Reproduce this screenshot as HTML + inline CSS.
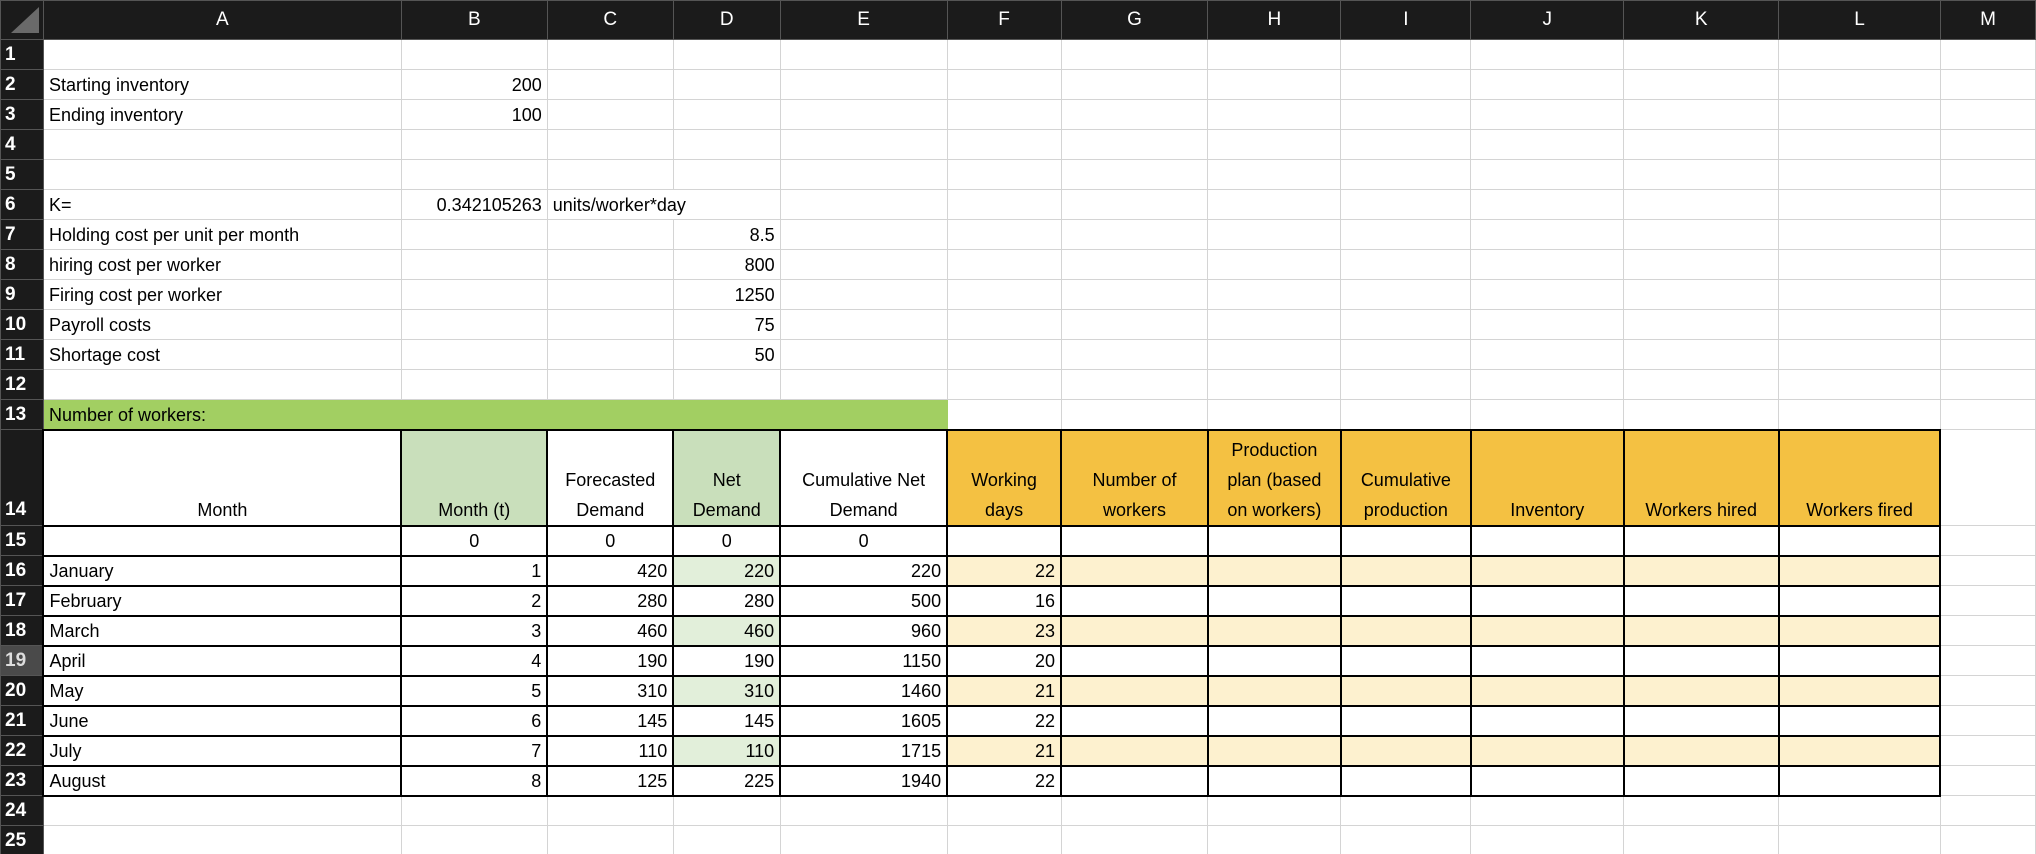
<!DOCTYPE html>
<html><head><meta charset="utf-8"><style>
html,body{margin:0;padding:0;background:#fff;width:2036px;height:854px;overflow:hidden}
table{border-collapse:collapse;table-layout:fixed;font-family:"Liberation Sans",Arial,sans-serif;font-size:18px;color:#000}
td{border:1px solid #d4d4d4;padding:0 5px;white-space:nowrap;overflow:hidden;vertical-align:bottom;line-height:28px}
tr.h td{background:#1b1b1b;color:#fff;text-align:center;vertical-align:middle;border:1px solid #555;font-size:19px}
td.n{background:#1b1b1b;color:#fff;border:1px solid #555;text-align:left;padding:0 0 0 4px;font-size:19px;font-weight:bold}
td.sel{background:#4a4a4a;color:#ddd}
.r{text-align:right}.c{text-align:center}
.b{border:2px solid #000}
.gr{background:#a2cf62}
.lg{background:#c9dfbb}
.pg{background:#e2efda}
.or{background:#f4c142}
.po{background:#fdf1cf}
tr.t14 td{line-height:30px;text-align:center;white-space:normal}
</style></head><body>
<table>
<colgroup><col style="width:43px"><col style="width:358px"><col style="width:146px"><col style="width:126px"><col style="width:107px"><col style="width:167px"><col style="width:114px"><col style="width:147px"><col style="width:133px"><col style="width:130px"><col style="width:153px"><col style="width:155px"><col style="width:162px"><col style="width:95px"></colgroup>
<tr class="h" style="height:39px"><td style="position:relative"><svg width="36" height="30" style="position:absolute;left:4px;top:4px"><polygon points="34,2 34,28 6,28" fill="#6a6a6a"/></svg></td><td>A</td><td>B</td><td>C</td><td>D</td><td>E</td><td>F</td><td>G</td><td>H</td><td>I</td><td>J</td><td>K</td><td>L</td><td>M</td></tr>
<tr style="height:30px"><td class="n">1</td><td></td><td></td><td></td><td></td><td></td><td></td><td></td><td></td><td></td><td></td><td></td><td></td><td></td></tr>
<tr style="height:30px"><td class="n">2</td><td>Starting inventory</td><td class="r">200</td><td></td><td></td><td></td><td></td><td></td><td></td><td></td><td></td><td></td><td></td><td></td></tr>
<tr style="height:30px"><td class="n">3</td><td>Ending inventory</td><td class="r">100</td><td></td><td></td><td></td><td></td><td></td><td></td><td></td><td></td><td></td><td></td><td></td></tr>
<tr style="height:30px"><td class="n">4</td><td></td><td></td><td></td><td></td><td></td><td></td><td></td><td></td><td></td><td></td><td></td><td></td><td></td></tr>
<tr style="height:30px"><td class="n">5</td><td></td><td></td><td></td><td></td><td></td><td></td><td></td><td></td><td></td><td></td><td></td><td></td><td></td></tr>
<tr style="height:30px"><td class="n">6</td><td>K=</td><td class="r">0.342105263</td><td colspan="2" style="border-right-color:#d4d4d4">units/worker*day</td><td></td><td></td><td></td><td></td><td></td><td></td><td></td><td></td><td></td></tr>
<tr style="height:30px"><td class="n">7</td><td>Holding cost per unit per month</td><td></td><td></td><td class="r">8.5</td><td></td><td></td><td></td><td></td><td></td><td></td><td></td><td></td><td></td></tr>
<tr style="height:30px"><td class="n">8</td><td>hiring cost per worker</td><td></td><td></td><td class="r">800</td><td></td><td></td><td></td><td></td><td></td><td></td><td></td><td></td><td></td></tr>
<tr style="height:30px"><td class="n">9</td><td>Firing cost per worker</td><td></td><td></td><td class="r">1250</td><td></td><td></td><td></td><td></td><td></td><td></td><td></td><td></td><td></td></tr>
<tr style="height:30px"><td class="n">10</td><td>Payroll costs</td><td></td><td></td><td class="r">75</td><td></td><td></td><td></td><td></td><td></td><td></td><td></td><td></td><td></td></tr>
<tr style="height:30px"><td class="n">11</td><td>Shortage cost</td><td></td><td></td><td class="r">50</td><td></td><td></td><td></td><td></td><td></td><td></td><td></td><td></td><td></td></tr>
<tr style="height:30px"><td class="n">12</td><td></td><td></td><td></td><td></td><td></td><td></td><td></td><td></td><td></td><td></td><td></td><td></td><td></td></tr>
<tr style="height:30px"><td class="n">13</td><td colspan="5" class="gr" style="border-color:#a2cf62">Number of workers:</td><td></td><td></td><td></td><td></td><td></td><td></td><td></td><td></td></tr>
<tr class="t14" style="height:96px"><td class="n" style="text-align:left">14</td><td class="b">Month</td><td class="b lg">Month (t)</td><td class="b">Forecasted<br>Demand</td><td class="b lg">Net<br>Demand</td><td class="b">Cumulative Net<br>Demand</td><td class="b or">Working<br>days</td><td class="b or">Number of<br>workers</td><td class="b or">Production<br>plan (based<br>on workers)</td><td class="b or">Cumulative<br>production</td><td class="b or">Inventory</td><td class="b or">Workers hired</td><td class="b or">Workers fired</td><td></td></tr>
<tr style="height:30px"><td class="n">15</td><td class="b"></td><td class="b c">0</td><td class="b c">0</td><td class="b c">0</td><td class="b c">0</td><td class="b"></td><td class="b"></td><td class="b"></td><td class="b"></td><td class="b"></td><td class="b"></td><td class="b"></td><td></td></tr>
<tr style="height:30px"><td class="n">16</td><td class="b">January</td><td class="b r">1</td><td class="b r">420</td><td class="b r pg">220</td><td class="b r">220</td><td class="b r po">22</td><td class="b po"></td><td class="b po"></td><td class="b po"></td><td class="b po"></td><td class="b po"></td><td class="b po"></td><td></td></tr>
<tr style="height:30px"><td class="n">17</td><td class="b">February</td><td class="b r">2</td><td class="b r">280</td><td class="b r">280</td><td class="b r">500</td><td class="b r">16</td><td class="b"></td><td class="b"></td><td class="b"></td><td class="b"></td><td class="b"></td><td class="b"></td><td></td></tr>
<tr style="height:30px"><td class="n">18</td><td class="b">March</td><td class="b r">3</td><td class="b r">460</td><td class="b r pg">460</td><td class="b r">960</td><td class="b r po">23</td><td class="b po"></td><td class="b po"></td><td class="b po"></td><td class="b po"></td><td class="b po"></td><td class="b po"></td><td></td></tr>
<tr style="height:30px"><td class="n sel">19</td><td class="b">April</td><td class="b r">4</td><td class="b r">190</td><td class="b r">190</td><td class="b r">1150</td><td class="b r">20</td><td class="b"></td><td class="b"></td><td class="b"></td><td class="b"></td><td class="b"></td><td class="b"></td><td></td></tr>
<tr style="height:30px"><td class="n">20</td><td class="b">May</td><td class="b r">5</td><td class="b r">310</td><td class="b r pg">310</td><td class="b r">1460</td><td class="b r po">21</td><td class="b po"></td><td class="b po"></td><td class="b po"></td><td class="b po"></td><td class="b po"></td><td class="b po"></td><td></td></tr>
<tr style="height:30px"><td class="n">21</td><td class="b">June</td><td class="b r">6</td><td class="b r">145</td><td class="b r">145</td><td class="b r">1605</td><td class="b r">22</td><td class="b"></td><td class="b"></td><td class="b"></td><td class="b"></td><td class="b"></td><td class="b"></td><td></td></tr>
<tr style="height:30px"><td class="n">22</td><td class="b">July</td><td class="b r">7</td><td class="b r">110</td><td class="b r pg">110</td><td class="b r">1715</td><td class="b r po">21</td><td class="b po"></td><td class="b po"></td><td class="b po"></td><td class="b po"></td><td class="b po"></td><td class="b po"></td><td></td></tr>
<tr style="height:30px"><td class="n">23</td><td class="b">August</td><td class="b r">8</td><td class="b r">125</td><td class="b r">225</td><td class="b r">1940</td><td class="b r">22</td><td class="b"></td><td class="b"></td><td class="b"></td><td class="b"></td><td class="b"></td><td class="b"></td><td></td></tr>
<tr style="height:30px"><td class="n">24</td><td></td><td></td><td></td><td></td><td></td><td></td><td></td><td></td><td></td><td></td><td></td><td></td><td></td></tr>
<tr style="height:30px"><td class="n">25</td><td></td><td></td><td></td><td></td><td></td><td></td><td></td><td></td><td></td><td></td><td></td><td></td><td></td></tr>
</table>
</body></html>
